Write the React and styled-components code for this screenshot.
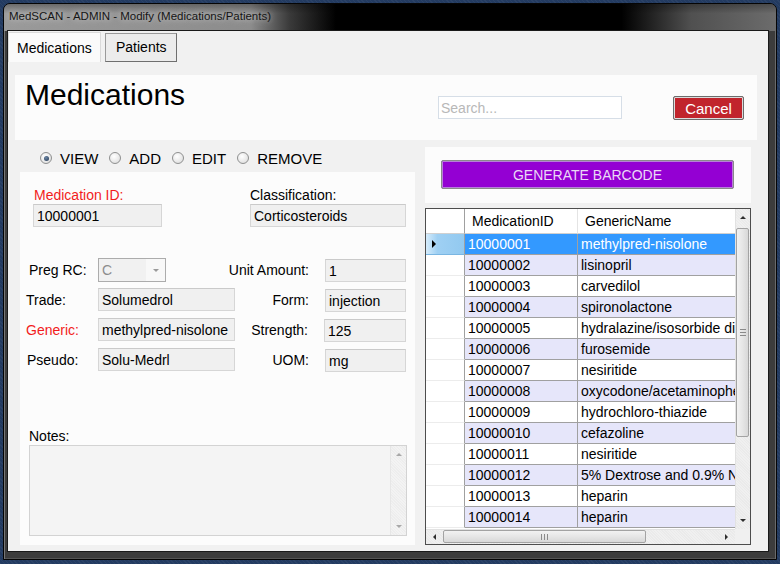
import React from 'react'
import styled, { createGlobalStyle } from 'styled-components'

const GlobalStyle = createGlobalStyle`
  html, body { margin: 0; padding: 0; }
  body {
    width: 780px;
    height: 564px;
    overflow: hidden;
    background-color: #233b61;
    background-image: repeating-linear-gradient(45deg, rgba(255,255,255,0.04) 0 1px, transparent 1px 3px);
    font-family: "Liberation Sans", Arial, sans-serif;
  }
  * { box-sizing: border-box; }
`

const medications = [
  ['10000001', 'methylpred-nisolone'],
  ['10000002', 'lisinopril'],
  ['10000003', 'carvedilol'],
  ['10000004', 'spironolactone'],
  ['10000005', 'hydralazine/isosorbide dinitrate'],
  ['10000006', 'furosemide'],
  ['10000007', 'nesiritide'],
  ['10000008', 'oxycodone/acetaminophen'],
  ['10000009', 'hydrochloro-thiazide'],
  ['10000010', 'cefazoline'],
  ['10000011', 'nesiritide'],
  ['10000012', '5% Dextrose and 0.9% NaCl'],
  ['10000013', 'heparin'],
  ['10000014', 'heparin'],
]

const Window = styled.div`
  margin: 3px 0 0 3px;
  width: 774px;
  height: 557px;
  display: flex;
  flex-direction: column;
  border: 1px solid #050505;
  border-radius: 7px 7px 0 0;
  background: #3c3c3c;
  padding: 0 8px 8px 4px;
  box-shadow: inset 1px 0 0 #777, inset -1px 0 0 #6a6a6a, inset 0 -1px 0 #555;
`

const TitleBar = styled.div`
  height: 27px;
  margin: 0 -8px 0 -4px;
  padding: 0 0 3px 5px;
  display: flex;
  align-items: center;
  border-radius: 6px 6px 0 0;
  font-size: 11.5px;
  color: #151515;
  text-shadow: 0 0 6px rgba(220, 220, 220, 0.9);
  background:
    linear-gradient(180deg, rgba(0,0,0,0.3) 0, rgba(0,0,0,0) 35%),
    linear-gradient(90deg, #9a9a9a 0, #8c8c8c 32%, #3a3a3a 37%, #000 43%, #000 80%, #505050 89%, #6c6c6c 100%);
`

const Client = styled.div`
  flex: 1;
  display: flex;
  flex-direction: column;
  background: #f1f1f1;
  box-shadow: 0 0 0 1px #1a1a1a;
`

const TabStrip = styled.div`
  height: 31px;
  display: flex;
  align-items: flex-end;
  gap: 4px;
`

const Tab = styled.div`
  height: ${p => (p.$active ? 30 : 29)}px;
  width: ${p => p.$w}px;
  padding-left: ${p => (p.$active ? 8 : 10)}px;
  display: flex;
  align-items: center;
  font-size: 14px;
  color: #000;
  background: ${p => (p.$active ? '#fafafa' : '#ececec')};
  border: 1px solid ${p => (p.$active ? '#dadada' : '#9a9a9a')};
  border-bottom: ${p => (p.$active ? 'none' : '1px solid #6f6f6f')};
  border-right-color: ${p => (p.$active ? '#dadada' : '#6f6f6f')};
  padding-bottom: ${p => (p.$active ? 0 : 2)}px;
`

const Page = styled.div`
  flex: 1;
  display: flex;
  flex-direction: column;
  padding: 13px 11px 0 7px;
`

const HeaderPanel = styled.div`
  height: 65px;
  display: flex;
  align-items: flex-start;
  background: #fcfcfc;
  padding: 3px 13px 0 10px;
`

const Title = styled.h1`
  flex: 1;
  margin: 0;
  font-size: 30px;
  line-height: 34px;
  font-weight: normal;
  color: #000;
`

const Search = styled.input`
  margin-top: 18px;
  width: 184px;
  height: 23px;
  border: 1px solid #d6dee7;
  background: #fff;
  padding: 0 2px;
  font-family: "Liberation Sans", Arial, sans-serif;
  font-size: 14px;
  outline: none;
  &::placeholder { color: #b8b8b8; }
`

const CancelButton = styled.button`
  margin: 18px 0 0 51px;
  width: 71px;
  height: 24px;
  padding: 0;
  background: #c1242c;
  border: 1px solid #6c6c6c;
  border-radius: 2px;
  box-shadow: inset 0 0 0 1px #dcdcdc;
  color: #fff;
  font-family: "Liberation Sans", Arial, sans-serif;
  font-size: 15px;
`

const Body = styled.div`
  display: flex;
  gap: 10px;
  margin-top: 7px;
  padding-left: 5px;
`

const LeftCol = styled.div`
  width: 395px;
  display: flex;
  flex-direction: column;
`

const RadioRow = styled.div`
  height: 25px;
  display: flex;
  align-items: center;
  gap: 11px;
  padding: 0 0 3px 20px;
`

const RadioItem = styled.label`
  display: flex;
  align-items: center;
  gap: 8px;
  font-size: 15px;
  color: #000;
`

const RadioDot = styled.span`
  position: relative;
  width: 12px;
  height: 12px;
  border-radius: 50%;
  border: 1px solid #8f9090;
  background: radial-gradient(circle at 40% 35%, #ffffff 0, #e4e4e4 70%, #d0d0d0 100%);
  &::after {
    content: '';
    display: ${p => (p.$checked ? 'block' : 'none')};
    position: absolute;
    left: 2.5px;
    top: 2.5px;
    width: 5px;
    height: 5px;
    border-radius: 50%;
    background: radial-gradient(circle at 40% 35%, #6b86a6 0, #23364f 100%);
  }
`

const FormPanel = styled.div`
  height: 373px;
  background: #fcfcfc;
  padding: 15px 9px 0 6px;
  display: flex;
  flex-direction: column;
`

const TopFields = styled.div`
  display: grid;
  grid-template-columns: 217px 156px;
  padding-left: 7px;
`

const Field = styled.div`
  display: flex;
  flex-direction: column;
  gap: 1px;
`

const FieldLabel = styled.span`
  font-size: 14px;
  line-height: 16px;
  color: ${p => (p.$required ? '#f21c1c' : '#000')};
  padding-left: ${p => p.$indent || 0}px;
  white-space: nowrap;
`

const TextBox = styled.input`
  width: ${p => p.$w}px;
  height: 23px;
  align-self: ${p => p.$align || 'auto'};
  background: #f0f0f0;
  border: 1px solid #d6d6d6;
  border-top-color: #cacaca;
  padding: 0 3px;
  font-family: "Liberation Sans", Arial, sans-serif;
  font-size: 14px;
  color: #000;
  outline: none;
`

const LowerRows = styled.div`
  margin-top: 31px;
  width: 380px;
  display: flex;
  flex-direction: column;
  gap: 6px;
`

const Row = styled.div`
  height: 24px;
  display: flex;
  align-items: center;
`

const RowLabel = styled(FieldLabel)`
  width: 72px;
`

const RightLabel = styled(FieldLabel)`
  flex: 1;
  text-align: right;
  padding-right: 16px;
`

const Combo = styled.div`
  width: 68px;
  height: 24px;
  align-self: flex-start;
  display: flex;
  border: 1px solid #acacac;
  background: #f1f1f1;
  font-size: 14px;
  color: #8d8d8d;
`

const ComboText = styled.span`
  flex: 1;
  padding: 3px 0 0 3px;
`

const ComboArrow = styled.span`
  width: 19px;
  display: flex;
  align-items: center;
  justify-content: center;
  background: #f8f8f8;
`

const Notes = styled.div`
  margin: 56px 0 0 3px;
  display: flex;
  flex-direction: column;
  gap: 1px;
`

const NotesBox = styled.div`
  width: 378px;
  height: 91px;
  display: flex;
  border: 1px solid #d3d3d3;
  background: #f4f4f4;
`

const NotesArea = styled.div`
  flex: 1;
`

const NotesScroll = styled.div`
  width: 16px;
  display: flex;
  flex-direction: column;
  justify-content: space-between;
  align-items: center;
  padding: 7px 0;
  border-left: 1px solid #e6e6e6;
  background-color: #f3f3f3;
  background-image: repeating-linear-gradient(45deg, rgba(0,0,0,0.025) 0 1px, transparent 1px 2px);
`

const Arrow = styled.span`
  width: 0;
  height: 0;
  border-style: solid;
  border-color: transparent;
  ${p => p.$dir === 'up' && `border-width: 0 ${p.$s}px ${p.$s}px; border-bottom-color: ${p.$c};`}
  ${p => p.$dir === 'down' && `border-width: ${p.$s}px ${p.$s}px 0; border-top-color: ${p.$c};`}
  ${p => p.$dir === 'left' && `border-width: ${p.$s}px ${p.$s}px ${p.$s}px 0; border-right-color: ${p.$c};`}
  ${p => p.$dir === 'right' && `border-width: ${p.$s}px 0 ${p.$s}px ${p.$s}px; border-left-color: ${p.$c};`}
`

const RightCol = styled.div`
  width: 326px;
  display: flex;
  flex-direction: column;
  gap: 5px;
`

const ButtonPanel = styled.div`
  height: 56px;
  background: #fcfcfc;
  padding: 13px 0 0 16px;
`

const BarcodeButton = styled.button`
  width: 293px;
  height: 29px;
  padding: 0;
  background: #9400d3;
  border: 1px solid #8a8a8a;
  border-radius: 2px;
  box-shadow: inset 0 0 0 1px #b77fd9;
  color: #ead8f6;
  font-family: "Liberation Sans", Arial, sans-serif;
  font-size: 14px;
`

const DataGrid = styled.div`
  height: 337px;
  border: 1px solid #4d4d4d;
  background: #fff;
  display: grid;
  grid-template-columns: 309px 15px;
  grid-template-rows: 320px 15px;
`

const Viewport = styled.div`
  overflow: hidden;
  white-space: nowrap;
`

const GridRow = styled.div`
  display: grid;
  grid-template-columns: 39px 113px 220px;
  height: ${p => (p.$header ? 25 : 21)}px;
  font-size: 14px;
`

const HeaderCell = styled.div`
  display: flex;
  align-items: center;
  padding-left: 7px;
  background: #fff;
  border-right: 1px solid ${p => (p.$strong ? '#a0a0a0' : '#e4e4e4')};
  border-bottom: 1px solid #d0d0d0;
  color: #000;
`

const RowHeader = styled.div`
  display: flex;
  align-items: center;
  padding-left: 6px;
  background: ${p => (p.$selected ? 'linear-gradient(90deg, #d6ecfb 0, #9fd0f3 30%, #92c9f0 100%)' : '#fff')};
  border-right: 1px solid #a0a0a0;
  border-bottom: 1px solid ${p => (p.$selected ? '#7ab6e2' : '#ececec')};
`

const Cell = styled.div`
  display: flex;
  align-items: center;
  padding-left: ${p => p.$pad}px;
  overflow: hidden;
  background: ${p => (p.$selected ? '#3399ff' : p.$alt ? '#e6e6fa' : '#fff')};
  color: ${p => (p.$selected ? '#fff' : '#000')};
  border-right: 1px solid #a0a0a0;
  border-bottom: 1px solid #a0a0a0;
`

const VScroll = styled.div`
  display: flex;
  flex-direction: column;
  background-color: #f0f0f0;
  background-image: repeating-linear-gradient(45deg, rgba(0,0,0,0.025) 0 1px, transparent 1px 2px);
  border-left: 1px solid #e2e2e2;
`

const HScroll = styled.div`
  display: flex;
  background-color: #f0f0f0;
  background-image: repeating-linear-gradient(45deg, rgba(0,0,0,0.025) 0 1px, transparent 1px 2px);
  border-top: 1px solid #e2e2e2;
`

const ScrollButton = styled.div`
  flex: 0 0 17px;
  display: flex;
  align-items: center;
  justify-content: center;
`

const Thumb = styled.div`
  display: flex;
  align-items: center;
  justify-content: center;
  gap: 2px;
  flex-direction: ${p => (p.$vertical ? 'column' : 'row')};
  ${p => (p.$vertical
    ? `width: 13px; height: 209px; margin: 2px 0 0 0;`
    : `height: 13px; width: 203px; margin: 0;`)}
  border: 1px solid #a3a3a3;
  border-radius: 2px;
  background: ${p => (p.$vertical
    ? 'linear-gradient(90deg, #f2f2f2 0, #e6e6e6 50%, #d8d8d8 100%)'
    : 'linear-gradient(180deg, #f2f2f2 0, #e6e6e6 50%, #d8d8d8 100%)')};
`

const Grip = styled.span`
  background: #8a8a8a;
  ${p => (p.$vertical ? 'width: 6px; height: 1px;' : 'width: 1px; height: 6px;')}
`

const Corner = styled.div`
  background: #f0f0f0;
`

const Spacer = styled.div`
  flex: 1;
`

const modes = ['VIEW', 'ADD', 'EDIT', 'REMOVE']

const App = () => {
  return (
    <>
      <GlobalStyle />
      <Window>
        <TitleBar>MedSCAN - ADMIN - Modify (Medications/Patients)</TitleBar>
        <Client>
          <TabStrip>
            <Tab $active $w={93}>Medications</Tab>
            <Tab $w={72}>Patients</Tab>
          </TabStrip>
          <Page>
            <HeaderPanel>
              <Title>Medications</Title>
              <Search placeholder="Search..." />
              <CancelButton>Cancel</CancelButton>
            </HeaderPanel>
            <Body>
              <LeftCol>
                <RadioRow>
                  {modes.map((m, i) => (
                    <RadioItem key={m}>
                      <RadioDot $checked={i === 0} />
                      {m}
                    </RadioItem>
                  ))}
                </RadioRow>
                <FormPanel>
                  <TopFields>
                    <Field>
                      <FieldLabel $required $indent={1}>Medication ID:</FieldLabel>
                      <TextBox $w={129} readOnly value="10000001" />
                    </Field>
                    <Field>
                      <FieldLabel>Classification:</FieldLabel>
                      <TextBox $w={156} readOnly value="Corticosteroids" />
                    </Field>
                  </TopFields>
                  <LowerRows>
                    <Row>
                      <RowLabel $indent={3}>Preg RC:</RowLabel>
                      <Combo>
                        <ComboText>C</ComboText>
                        <ComboArrow><Arrow $dir="down" $s={3} $c="#9a9a9a" /></ComboArrow>
                      </Combo>
                      <RightLabel>Unit Amount:</RightLabel>
                      <TextBox $w={81} $align="flex-end" readOnly value="1" />
                    </Row>
                    <Row>
                      <RowLabel>Trade:</RowLabel>
                      <TextBox $w={137} $align="flex-start" readOnly value="Solumedrol" />
                      <RightLabel>Form:</RightLabel>
                      <TextBox $w={81} $align="flex-end" readOnly value="injection" />
                    </Row>
                    <Row>
                      <RowLabel $required>Generic:</RowLabel>
                      <TextBox $w={137} $align="flex-start" readOnly value="methylpred-nisolone" />
                      <RightLabel>Strength:</RightLabel>
                      <TextBox $w={82} $align="flex-end" readOnly value="125" />
                    </Row>
                    <Row>
                      <RowLabel $indent={1}>Pseudo:</RowLabel>
                      <TextBox $w={137} $align="flex-start" readOnly value="Solu-Medrl" />
                      <RightLabel>UOM:</RightLabel>
                      <TextBox $w={81} $align="flex-end" readOnly value="mg" />
                    </Row>
                  </LowerRows>
                  <Notes>
                    <FieldLabel>Notes:</FieldLabel>
                    <NotesBox>
                      <NotesArea />
                      <NotesScroll>
                        <Arrow $dir="up" $s={3} $c="#a8a8a8" />
                        <Arrow $dir="down" $s={3} $c="#a8a8a8" />
                      </NotesScroll>
                    </NotesBox>
                  </Notes>
                </FormPanel>
              </LeftCol>
              <RightCol>
                <ButtonPanel>
                  <BarcodeButton>GENERATE BARCODE</BarcodeButton>
                </ButtonPanel>
                <DataGrid>
                  <Viewport>
                    <GridRow $header>
                      <HeaderCell $strong />
                      <HeaderCell>MedicationID</HeaderCell>
                      <HeaderCell>GenericName</HeaderCell>
                    </GridRow>
                    {medications.map(([id, name], i) => (
                      <GridRow key={id}>
                        <RowHeader $selected={i === 0}>
                          {i === 0 && <Arrow $dir="right" $s={4} $c="#000" />}
                        </RowHeader>
                        <Cell $pad={3} $selected={i === 0} $alt={i % 2 === 1}>{id}</Cell>
                        <Cell $pad={3} $selected={i === 0} $alt={i % 2 === 1}>{name}</Cell>
                      </GridRow>
                    ))}
                  </Viewport>
                  <VScroll>
                    <ScrollButton><Arrow $dir="up" $s={3} $c="#2e2e2e" /></ScrollButton>
                    <Thumb $vertical>
                      <Grip $vertical />
                      <Grip $vertical />
                      <Grip $vertical />
                    </Thumb>
                    <Spacer />
                    <ScrollButton><Arrow $dir="down" $s={3} $c="#2e2e2e" /></ScrollButton>
                  </VScroll>
                  <HScroll>
                    <ScrollButton><Arrow $dir="left" $s={3} $c="#2e2e2e" /></ScrollButton>
                    <Thumb>
                      <Grip />
                      <Grip />
                      <Grip />
                    </Thumb>
                    <Spacer />
                    <ScrollButton><Arrow $dir="right" $s={3} $c="#2e2e2e" /></ScrollButton>
                  </HScroll>
                  <Corner />
                </DataGrid>
              </RightCol>
            </Body>
          </Page>
        </Client>
      </Window>
    </>
  )
}

export default App
